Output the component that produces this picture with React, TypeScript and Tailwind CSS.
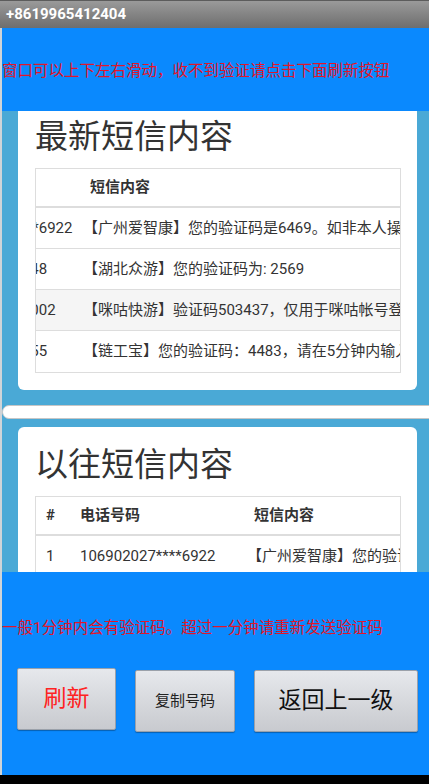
import React from "react";

type Row = { n: string; phone: string; text: string; gray?: boolean };

const latest: Row[] = [
  { n: "1", phone: "106902027****6922", text: "【广州爱智康】您的验证码是6469。如非本人操作，请忽略本短信。" },
  { n: "2", phone: "106575****2548", text: "【湖北众游】您的验证码为: 2569" },
  { n: "3", phone: "1065752****0002", text: "【咪咕快游】验证码503437，仅用于咪咕帐号登录，请勿泄露。", gray: true },
  { n: "4", phone: "106550****2555", text: "【链工宝】您的验证码：4483，请在5分钟内输入。" },
];

const history: Row[] = [
  { n: "1", phone: "106902027****6922", text: "【广州爱智康】您的验证码是6469。如非本人操作，请忽略本短信。" },
  { n: "2", phone: "106575****2548", text: "【湖北众游】您的验证码为: 2569" },
];

function SmsTable({ rows, scrolled }: { rows: Row[]; scrolled?: boolean }) {
  const phoneW = scrolled ? "w-[153px]" : "w-[174px]";
  return (
    <div className="border border-[#dddddd] overflow-hidden bg-white">
      <div className={scrolled ? "-ml-[143px] w-max min-w-full flex flex-col" : "w-max min-w-full flex flex-col"}>
        <div className="flex items-center h-[39px] border-b-2 border-[#dddddd] font-bold text-[15px] text-[#333333]">
          <div className="w-[34px] pl-[10px] shrink-0">#</div>
          <div className={`${phoneW} pl-[10px] shrink-0`}>电话号码</div>
          <div className="pl-[10px] pr-[10px] whitespace-nowrap">短信内容</div>
        </div>
        {rows.map((r, i) => (
          <div
            key={i}
            className={`flex items-center h-[41px] border-b border-[#dddddd] last:border-b-0 text-[15px] text-[#333333] ${r.gray ? "bg-[#f5f5f5]" : "bg-white"}`}
          >
            <div className="w-[34px] pl-[10px] shrink-0">{r.n}</div>
            <div className={`${phoneW} pl-[10px] shrink-0 whitespace-nowrap`}>{r.phone}</div>
            <div className="pl-[10px] pr-[10px] whitespace-nowrap -indent-[7px]">{r.text}</div>
          </div>
        ))}
      </div>
    </div>
  );
}

export default function App() {
  return (
    <div className="w-[429px] h-[784px] flex flex-col overflow-hidden font-[family-name:Roboto,'Noto_Sans_CJK_SC',sans-serif]">
      <div className="h-[28px] shrink-0 border-t border-[#5c5c5c] bg-linear-to-b from-[#9a9a9a] to-[#6e6e6e] flex items-center pl-[6px]">
        <span className="text-white font-bold text-[15px] leading-none">+8619965412404</span>
      </div>
      <div className="flex-1 flex flex-col border-l-2 border-[#cfd4d8] min-h-0">
        <div className="h-[83px] shrink-0 bg-[#0a89fe] flex items-center">
          <span className="text-[#e0162a] text-[15.5px] whitespace-nowrap leading-[20px] pt-[2px]">
            窗口可以上下左右滑动，收不到验证请点击下面刷新按钮
          </span>
        </div>
        <div className="h-[461px] shrink-0 bg-[#4aa9d6] overflow-hidden flex flex-col">
          <div className="ml-[16px] mr-[12px] bg-white rounded-b-[6px] pt-[6px] pb-[17px] pl-[17px] pr-[16px] shrink-0">
            <div className="text-[33px] leading-[40px] text-[#333333] mb-[11px]">最新短信内容</div>
            <SmsTable rows={latest} scrolled />
          </div>
          <div className="mt-[15px] h-[14px] shrink-0 -mr-[10px] rounded-l-[7px] border border-[#c6c6c6] bg-white" />
          <div className="mt-[8px] ml-[16px] mr-[12px] bg-white rounded-t-[6px] pt-[18px] pl-[17px] pr-[16px] shrink-0">
            <div className="text-[33px] leading-[40px] text-[#333333] mb-[11px]">以往短信内容</div>
            <SmsTable rows={history} />
          </div>
        </div>
        <div className="h-[203px] shrink-0 bg-[#0a89fe] flex flex-col">
          <div className="pt-[46px] h-[66px]">
            <span className="text-[#e0162a] text-[15.5px] whitespace-nowrap leading-[20px] block">
              一般1分钟内会有验证码。超过一分钟请重新发送验证码
            </span>
          </div>
          <div className="mt-[30px] flex items-start pl-[15px] gap-[19px]">
            <button className="w-[99px] h-[62px] rounded-[2px] border border-[#9ba1aa] bg-linear-to-b from-[#e6e8ec] to-[#c8cacf] shadow-[0_1px_1px_rgba(0,0,0,0.3)] text-[23px] text-[#ff2222] flex items-center justify-center">
              刷新
            </button>
            <button className="mt-[2px] w-[100px] h-[62px] rounded-[2px] border border-[#9ba1aa] bg-linear-to-b from-[#e6e8ec] to-[#c8cacf] shadow-[0_1px_1px_rgba(0,0,0,0.3)] text-[15px] text-[#222222] flex items-center justify-center">
              复制号码
            </button>
            <button className="mt-[2px] w-[164px] h-[62px] rounded-[2px] border border-[#9ba1aa] bg-linear-to-b from-[#e6e8ec] to-[#c8cacf] shadow-[0_1px_1px_rgba(0,0,0,0.3)] text-[23px] text-[#111111] flex items-center justify-center">
              返回上一级
            </button>
          </div>
        </div>
      </div>
      <div className="h-[9px] shrink-0 bg-black" />
    </div>
  );
}
